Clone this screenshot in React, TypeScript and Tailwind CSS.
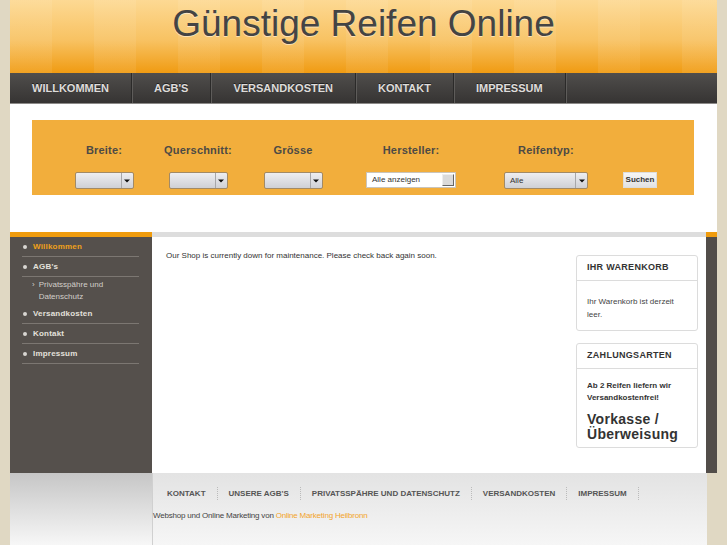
import React from 'react'

const navItems = ['WILLKOMMEN', "AGB'S", 'VERSANDKOSTEN', 'KONTAKT', 'IMPRESSUM']
const footerLinks = ['KONTAKT', "UNSERE AGB'S", 'PRIVATSSPÄHRE UND DATENSCHUTZ', 'VERSANDKOSTEN', 'IMPRESSUM']

function Arrow() {
  return (
    <svg width="6" height="4" viewBox="0 0 6 4">
      <path d="M0 0.5h6L3 3.5z" fill="#111" />
    </svg>
  )
}

function GreySelect({ className, text }: { className: string; text?: string }) {
  return (
    <div
      className={`flex h-[17px] overflow-hidden rounded-[2px] border border-[#a28a66] bg-gradient-to-b from-[#eeeef1] to-[#cfd0d5] ${className}`}
    >
      <div className="flex flex-1 items-center pl-[5px] text-[8px] text-[#333]">{text}</div>
      <div className="flex w-[12px] items-center justify-center border-l border-[#a7a7aa]">
        <Arrow />
      </div>
    </div>
  )
}

function Column({ w, label, children }: { w: string; label: string; children: React.ReactNode }) {
  return (
    <div className={`flex flex-col items-center ${w}`}>
      <div className="h-[13px] text-[11px] font-bold leading-[13px] tracking-[0.2px] text-[#4d4a45]">{label}</div>
      <div className="mt-[15px] flex w-full justify-center">{children}</div>
    </div>
  )
}

function SideItem({ label, active }: { label: string; active?: boolean }) {
  return (
    <li className="flex h-[20px] items-center border-b border-[#7c7772]">
      <span className="ml-[1px] mr-[6px] h-[4px] w-[4px] rounded-full bg-[#d8d6d2]" />
      <span className={`text-[8px] font-bold tracking-[0.2px] ${active ? 'text-[#f0a01a]' : 'text-[#e4e1dc]'}`}>{label}</span>
    </li>
  )
}

function Box({ title, children }: { title: string; children: React.ReactNode }) {
  return (
    <div className="rounded-[3px] border border-[#dcdcdc] bg-white">
      <div className="flex h-[25px] items-center border-b border-[#dcdcdc] px-[10px] text-[9px] font-bold tracking-[0.3px] text-[#333]">
        {title}
      </div>
      <div className="px-[10px]">{children}</div>
    </div>
  )
}

export default function App() {
  return (
    <div className="h-[545px] w-[727px] overflow-hidden bg-[#e0d8c3] font-['Liberation_Sans',Arial,sans-serif]">
      <div className="ml-[10px] w-[707px]">
        {/* header */}
        <div className="h-[73px] bg-[repeating-linear-gradient(90deg,rgba(255,255,255,0.07)_0_42px,transparent_42px_84px),linear-gradient(#fdd993,#f8c262_55%,#f09b12)]">
          <h1 className="pt-[5px] text-center text-[37px] leading-none text-[#444] [text-shadow:0_1px_0_rgba(255,255,255,0.5)]">
            Günstige Reifen Online
          </h1>
        </div>

        {/* nav */}
        <div className="flex h-[31px] bg-gradient-to-b from-[#504e4c] to-[#363433] border-b border-[#8c8a88]">
          {navItems.map(item => (
            <div key={item} className="flex items-center border-r border-r-[#2b2a29] shadow-[1px_0_0_#5e5c5a]">
              <span className="px-[22px] text-[11px] font-bold text-[#dedcda] [text-shadow:0_-1px_0_#222]">{item}</span>
            </div>
          ))}
        </div>

        {/* search */}
        <div className="h-[128px] bg-white pt-[16px]">
          <div className="ml-[22px] flex h-[75px] w-[662px] bg-[#f2ae3c] pl-[25px] pt-[24px]">
            <Column w="w-[94px]" label="Breite:">
              <GreySelect className="w-[59px]" />
            </Column>
            <Column w="w-[94px]" label="Querschnitt:">
              <GreySelect className="w-[59px]" />
            </Column>
            <Column w="w-[96px]" label="Grösse">
              <GreySelect className="w-[59px]" />
            </Column>
            <Column w="w-[140px]" label="Hersteller:">
              <div className="flex h-[16px] w-[90px] items-center justify-between border border-[#c9c4bb] bg-white pl-[5px] pr-[1px]">
                <span className="text-[8px] text-[#333]">Alle anzeigen</span>
                <span className="h-[12px] w-[12px] border border-b-[#666] border-l-[#eee] border-r-[#666] border-t-[#eee] bg-[#dadada]" />
              </div>
            </Column>
            <Column w="w-[130px]" label="Reifentyp:">
              <GreySelect className="w-[84px]" text="Alle" />
            </Column>
            <Column w="w-[58px]" label="">
              <button className="flex h-[16px] w-[34px] items-center justify-center border border-[#ddd] bg-gradient-to-b from-[#f6f6f6] to-[#e2e2e2] text-[8px] font-bold text-[#333]">
                Suchen
              </button>
            </Column>
          </div>
        </div>

        {/* main row */}
        <div className="flex h-[241px]">
          <div className="w-[142px] border-t-[5px] border-[#f09c0e] bg-[#55504c] pl-[12px] pr-[13px]">
            <ul>
              <SideItem label="Willkommen" active />
              <SideItem label="AGB's" />
              <li className="pb-[1px] pt-[2px] text-[8px] leading-[12px] text-[#d2cfca]">
                <div className="flex">
                  <span className="ml-[10px] mr-[4px] text-[#d2cfca]">›</span>
                  <span>
                    Privatsspähre und
                    <br />
                    Datenschutz
                  </span>
                </div>
              </li>
              <SideItem label="Versandkosten" />
              <SideItem label="Kontakt" />
              <SideItem label="Impressum" />
            </ul>
          </div>
          <div className="flex w-[554px] border-t-[5px] border-[#dddddd] bg-white">
            <div className="flex-1 pl-[14px] pt-[13px] text-[8px] text-[#333]">
              Our Shop is currently down for maintenance. Please check back again soon.
            </div>
            <div className="mr-[8px] mt-[18px] flex w-[122px] flex-col gap-[12px]">
              <Box title="IHR WARENKORB">
                <p className="pb-[9px] pt-[14px] text-[8px] leading-[13px] text-[#444]">
                  Ihr Warenkorb ist derzeit
                  <br />
                  leer.
                </p>
              </Box>
              <Box title="ZAHLUNGSARTEN">
                <p className="pt-[11px] text-[8px] font-bold leading-[12px] text-[#333]">
                  Ab 2 Reifen liefern wir
                  <br />
                  Versandkostenfrei!
                </p>
                <p className="pb-[5px] pt-[8px] text-[14px] font-bold leading-[15px] tracking-[0.3px] text-[#333]">
                  Vorkasse /
                  <br />
                  Überweisung
                </p>
              </Box>
            </div>
          </div>
          <div className="w-[11px] border-t-[5px] border-[#f09c0e] bg-[#524d49]" />
        </div>

        {/* footer */}
        <div className="flex h-[72px] w-[697px]">
          <div className="w-[142px] bg-gradient-to-b from-[#c6c6c6] to-[#f7f7f7]" />
          <div className="flex-1 border-l border-[#d0d0d0] bg-gradient-to-b from-[#e3e3e3] to-[#f6f6f6] pt-[14px]">
            <div className="flex h-[13px] items-center pl-[3px]">
              {footerLinks.map(link => (
                <div key={link} className="flex items-center">
                  <span className="px-[11px] text-[8px] font-bold text-[#555]">{link}</span>
                  <span className="h-[13px] border-l border-dotted border-[#bbb]" />
                </div>
              ))}
            </div>
            <div className="mt-[10px] text-[8px] tracking-[-0.2px] text-[#444]">
              Webshop und Online Marketing von <span className="text-[#f2a42c]">Online Marketing Heilbronn</span>
            </div>
          </div>
        </div>
      </div>
    </div>
  )
}
